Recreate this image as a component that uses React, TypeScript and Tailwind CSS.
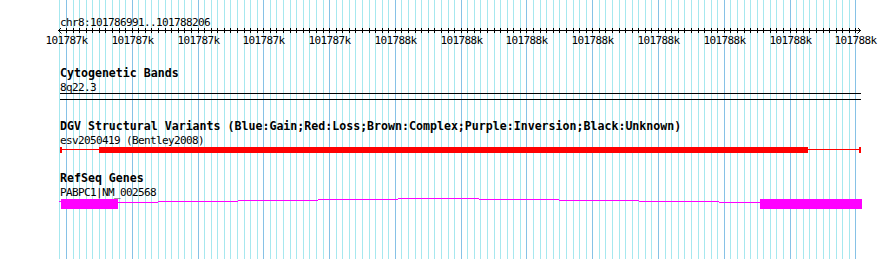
import React from "react";

const START = 101786991;
const SCALE = 800 / 1216;
const xOf = (bp: number) => 60 + (bp - START) * SCALE;
const GRID = Array.from({ length: 122 }, (_, i) => 101786990 + i * 10);
const MAJOR = GRID.filter((bp) => bp % 100 === 0);
const MINOR_C = "#a6e8ef";
const MAJOR_C = "#86c2e6";

const INTRON: [number, number, number][] = [
  [59, 61, 201],
  [118, 158, 202],
  [158, 238, 201],
  [238, 318, 200],
  [318, 398, 199],
  [398, 479, 198],
  [479, 559, 199],
  [559, 639, 200],
  [639, 719, 201],
  [719, 760, 202],
];

const small = "font-['DejaVu_Sans_Mono',monospace] text-[11px] tracking-[-0.62px] leading-[11px] text-black whitespace-nowrap pl-[60px]";
const bold = "font-['DejaVu_Sans_Mono',monospace] font-bold text-[11.6px] leading-[11px] text-black whitespace-nowrap pl-[60px]";

export default function App() {
  return (
    <div className="relative w-[890px] h-[259px] bg-white overflow-hidden">
      <svg className="absolute inset-0" width={890} height={259} shapeRendering="crispEdges">
        {GRID.map((bp) => (
          <rect
            key={bp}
            x={Math.round(xOf(bp))}
            y={0}
            width={1}
            height={259}
            fill={bp % 100 === 0 ? MAJOR_C : MINOR_C}
          />
        ))}
      </svg>
      <div className="relative flex flex-col pt-[17px]">
        <div className={`${small} h-[11px]`}>chr8:101786991..101788206</div>
        <svg width={890} height={21} className="block shrink-0">
          <g shapeRendering="crispEdges">
            <rect x={58} y={2} width={803} height={1} fill="#000" />
            {GRID.slice(1).map((bp) => (
              <rect key={bp} x={Math.round(xOf(bp))} y={0} width={1} height={5} fill="#000" />
            ))}
          </g>
          <path d="M61.5 -0.5 L58.5 2.5 L61.5 5.5" stroke="#000" strokeWidth={1} fill="none" />
          <path d="M857.5 -0.5 L860.5 2.5 L857.5 5.5" stroke="#000" strokeWidth={1} fill="none" />
          {MAJOR.map((bp) => (
            <text
              key={bp}
              x={Math.round(xOf(bp)) + 0.5}
              y={15.8}
              textAnchor="middle"
              fontFamily="'DejaVu Sans Mono', monospace"
              fontSize={11}
              letterSpacing={-0.62}
              fill="#000"
            >
              {Math.round(bp / 1000)}k
            </text>
          ))}
        </svg>
        <div className={`${bold} mt-[19px] h-[13.5px]`}>Cytogenetic Bands</div>
        <div className={`${small} h-[10.5px]`}>8q22.3</div>
        <svg width={890} height={10} className="block shrink-0" shapeRendering="crispEdges">
          <rect x={60} y={1} width={801} height={1} fill="#000" />
          <rect x={60} y={7} width={801} height={1} fill="#000" />
        </svg>
        <div className={`${bold} mt-[19px] h-[13.5px]`}>
          DGV Structural Variants (Blue:Gain;Red:Loss;Brown:Complex;Purple:Inversion;Black:Unknown)
        </div>
        <div className={`${small} h-[11.5px]`}>esv2050419 (Bentley2008)</div>
        <svg width={890} height={10} className="block shrink-0" shapeRendering="crispEdges">
          <rect x={60} y={3} width={800} height={1} fill="#ff0000" />
          <rect x={60} y={1} width={2} height={6} fill="#ff0000" />
          <rect x={99} y={1} width={709} height={6} fill="#ff0000" />
          <rect x={859} y={1} width={2} height={6} fill="#ff0000" />
        </svg>
        <div className={`${bold} mt-[17px] h-[13.5px]`}>RefSeq Genes</div>
        <div className={`${small} h-[11.5px]`}>PABPC1|NM_002568</div>
        <svg width={890} height={12} className="block shrink-0" shapeRendering="crispEdges">
          {INTRON.map(([a, b, r]) => (
            <rect key={a} x={a} y={r - 198} width={b - a} height={1} fill="#ff00ff" />
          ))}
          <rect x={61} y={1} width={57} height={10} fill="#ff00ff" />
          <rect x={760} y={1} width={102} height={10} fill="#ff00ff" />
        </svg>
      </div>
    </div>
  );
}
